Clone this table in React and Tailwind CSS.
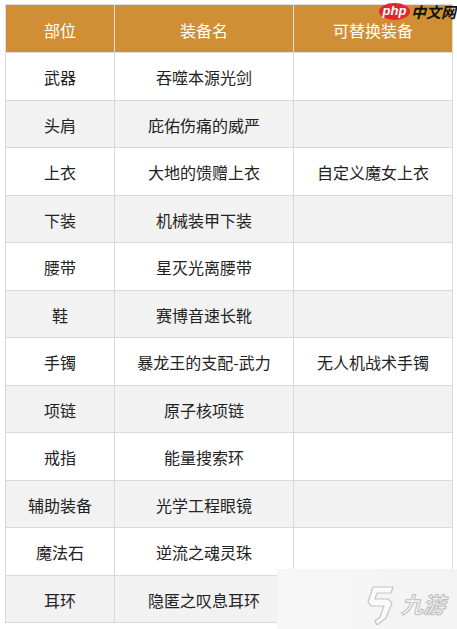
import React from "react";

const rows = [
  ["武器", "吞噬本源光剑", ""],
  ["头肩", "庇佑伤痛的威严", ""],
  ["上衣", "大地的馈赠上衣", "自定义魔女上衣"],
  ["下装", "机械装甲下装", ""],
  ["腰带", "星灭光离腰带", ""],
  ["鞋", "赛博音速长靴", ""],
  ["手镯", "暴龙王的支配-武力", "无人机战术手镯"],
  ["项链", "原子核项链", ""],
  ["戒指", "能量搜索环", ""],
  ["辅助装备", "光学工程眼镜", ""],
  ["魔法石", "逆流之魂灵珠", ""],
  ["耳环", "隐匿之叹息耳环", ""],
];

const App = () => {
  return (
    <div className="relative w-[457px] h-[629px] overflow-hidden bg-white font-['Noto_Sans_CJK_SC',sans-serif]">
      <div className="pt-[4px] pl-[5px]">
        <table className="border-collapse w-[447px] table-fixed text-[16px] leading-[18px]">
          <colgroup>
            <col className="w-[109px]" />
            <col className="w-[179px]" />
            <col className="w-[159px]" />
          </colgroup>
          <thead>
            <tr className="h-[48px] bg-[#d08f35] text-white">
              <th className="border border-[#dedede] font-normal pt-[3px]">部位</th>
              <th className="border border-[#dedede] font-normal pt-[3px]">装备名</th>
              <th className="border border-[#dedede] font-normal pt-[3px]">可替换装备</th>
            </tr>
          </thead>
          <tbody>
            {rows.map((r, i) => (
              <tr
                key={r[0]}
                className={`h-[47.5px] text-[#222] ${i % 2 === 1 ? "bg-[#f2f2f2]" : "bg-white"}`}
              >
                <td className="border border-[#d9d9d9] text-center pt-[2px]">{r[0]}</td>
                <td className="border border-[#d9d9d9] text-center pt-[2px]">{r[1]}</td>
                <td className="border border-[#d9d9d9] text-center pt-[2px]">{r[2]}</td>
              </tr>
            ))}
          </tbody>
        </table>
      </div>

      {/* php中文网 watermark */}
      <div className="absolute top-[3px] left-[379px] flex items-center">
        <div className="w-[31px] h-[17px] rounded-[50%] bg-[#e3262c] flex items-center justify-center">
          <span className="text-white italic font-bold text-[13px] leading-none font-['Liberation_Sans',sans-serif] -mt-[2px]">php</span>
        </div>
        <span className="ml-[1px] text-[#111] font-bold italic text-[15px] leading-none">中文网</span>
      </div>

      {/* 九游 watermark */}
      <div className="absolute z-10 left-[277px] top-[569px] w-[180px] h-[60px] bg-gradient-to-r from-[#f7f7f7] to-[#f3f3f3] flex items-center">
        <svg width="30" height="40" viewBox="0 0 30 40" className="ml-[87px] mt-[12px]">
          <path
            d="M9 2 L29 2 L27 8 L13 8 L11 14 L24 14 L28 18 L22 33 L13 40 L11 36 L16 32 L20 21 L7 21 L4 17 Z"
            fill="#fafafa"
            stroke="#c4c4c4"
            strokeWidth="1.2"
            strokeLinejoin="round"
          />
        </svg>
        <span className="ml-[7px] mt-[8px] italic font-bold text-[22px] leading-none text-transparent [-webkit-text-stroke:1px_#bdbdbd]">
          九游
        </span>
      </div>
    </div>
  );
};

export default App;
